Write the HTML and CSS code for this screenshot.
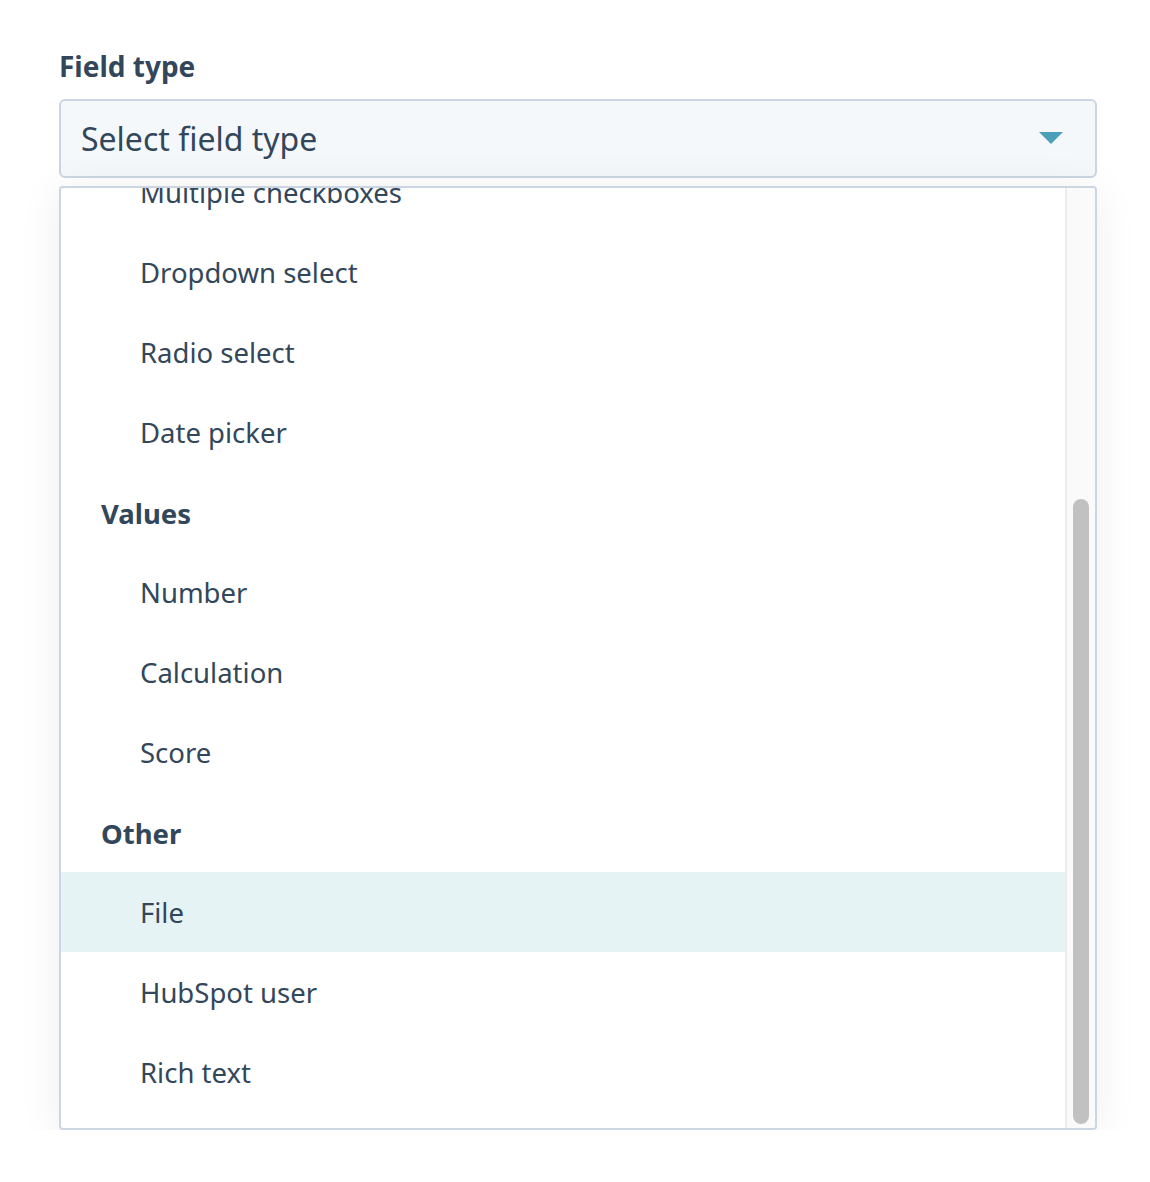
FILE: index.html
```html
<!DOCTYPE html>
<html>
<head>
<meta charset="utf-8">
<link rel="stylesheet" href="styles.css">
</head>
<body>
<div class="field">
  <div class="label">Field type</div>
  <div class="select">
    <span class="placeholder">Select field type</span>
    <span class="caret"></span>
  </div>
  <div class="dropdown">
    <div class="list">
      <div class="items">
        <div class="item">Multiple checkboxes</div>
        <div class="item">Dropdown select</div>
        <div class="item">Radio select</div>
        <div class="item">Date picker</div>
        <div class="group">Values</div>
        <div class="item">Number</div>
        <div class="item">Calculation</div>
        <div class="item">Score</div>
        <div class="group">Other</div>
        <div class="item active">File</div>
        <div class="item">HubSpot user</div>
        <div class="item">Rich text</div>
      </div>
    </div>
    <div class="track"><div class="thumb"></div></div>
  </div>
</div>
</body>
</html>
```
FILE: styles.css
```css
html, body {
  margin: 0;
  padding: 0;
  background: #ffffff;
}
body {
  font-family: "Noto Sans", "Lato", sans-serif;
  color: #33475b;
}
.field {
  padding: 46px 53px 0 59px;
  display: flex;
  flex-direction: column;
}
.label {
  font-size: 28px;
  font-weight: 700;
  line-height: 40px;
  height: 40px;
  margin-bottom: 13px;
}
.select {
  box-sizing: border-box;
  height: 79px;
  border: 2px solid #cbd6e2;
  border-radius: 6px;
  background: #f5f8fa;
  display: flex;
  align-items: center;
  justify-content: space-between;
  padding: 0 32px 0 20px;
}
.placeholder {
  font-size: 32px;
  margin-top: -1px;
}
.caret {
  width: 0;
  height: 0;
  border-left: 12px solid transparent;
  border-right: 12px solid transparent;
  border-top: 12px solid #4b9fb8;
  margin-top: -2px;
}
.dropdown {
  margin-top: 8px;
  box-sizing: border-box;
  height: 944px;
  border: 2px solid #cbd6e2;
  border-radius: 4px;
  background: #fff;
  display: flex;
  overflow: hidden;
  box-shadow: 0 4px 44px rgba(0, 0, 0, 0.07);
}
.list {
  flex: 1;
  overflow: hidden;
}
.items {
  margin-top: -36px;
}
.item, .group {
  height: 80px;
  display: flex;
  align-items: center;
  font-size: 27.5px;
}
.item {
  padding-left: 79px;
}
.group {
  padding-left: 40px;
  font-weight: 700;
  padding-top: 3px;
  box-sizing: border-box;
}
.item.active {
  background: #e5f3f5;
}
.track {
  width: 28px;
  background: #fafafa;
  border-left: 2px solid #ececec;
  position: relative;
}
.thumb {
  position: absolute;
  left: 6px;
  width: 16px;
  top: 311px;
  bottom: 4px;
  border-radius: 8px;
  background: #c1c1c1;
}
```
